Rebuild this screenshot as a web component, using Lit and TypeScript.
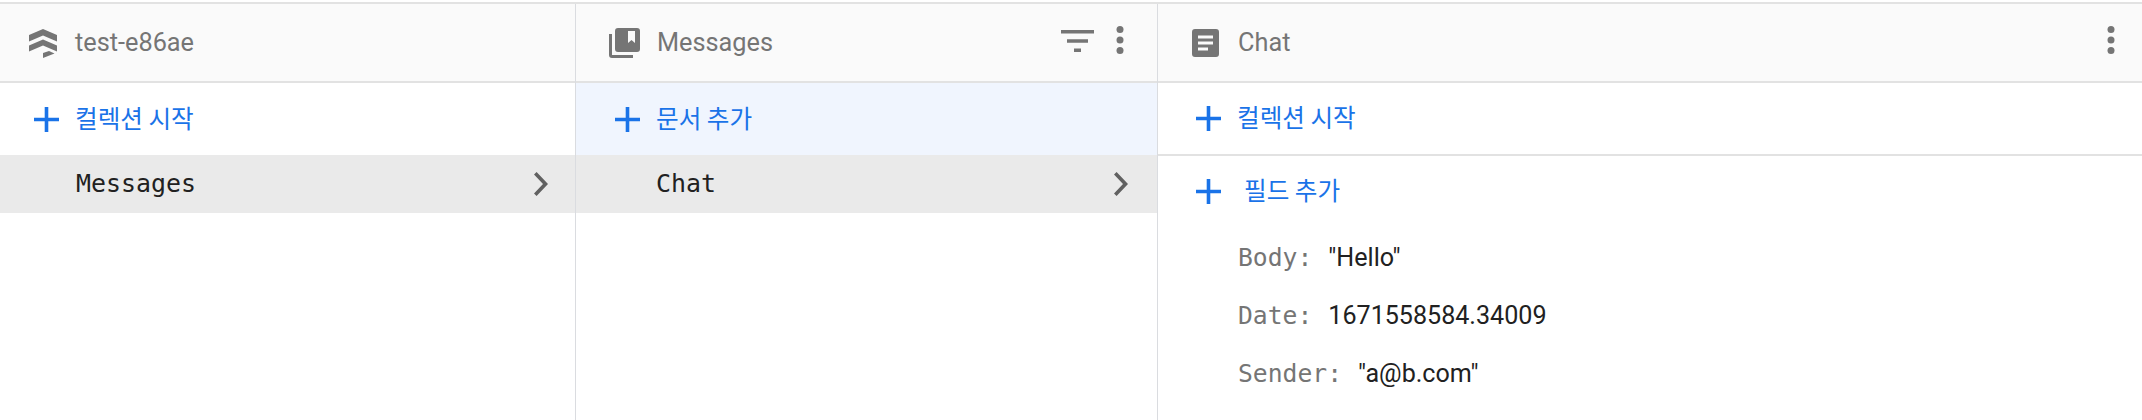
import { LitElement, html, css } from "lit";
import { customElement } from "lit/decorators.js";

const plus = html`<svg class="plus" viewBox="0 0 25 25"><path d="M10.7 0h3.6v10.7H25v3.6H14.3V25h-3.6V14.3H0v-3.6h10.700z"/></svg>`;
const chevron = html`<svg class="chev" viewBox="0 0 14 24"><path d="M2.6 0 0 2.6 9 12l-9 9.4L2.6 24 14 12z"/></svg>`;
const dots = (cls = "") => html`<svg class="dots ${cls}" viewBox="0 0 8 28"><circle cx="4" cy="3.500" r="3.500"/><circle cx="4" cy="14" r="3.500"/><circle cx="4" cy="24.500" r="3.500"/></svg>`;

@customElement("app-root")
export class AppRoot extends LitElement {
  static styles = css`
    :host { display: block; width: 2142px; height: 420px; overflow: hidden; background: #fff; font-family: Roboto, "Noto Sans CJK KR", sans-serif; }
    .top { height: 2px; background: #fff; border-bottom: 2px solid #e2e2e2; }
    .cols { display: grid; grid-template-columns: 576px 582px 1fr; height: 416px; }
    .col { border-right: 1px solid #dadce0; min-width: 0; display: flex; flex-direction: column; }
    .col:last-child { border-right: 0; }
    .head { height: 77px; flex: none; background: #fafafa; border-bottom: 2px solid #e2e2e2; display: flex; align-items: center; color: #757575; font-size: 25.3px; }
    .head svg { fill: #757575; flex: none; display: block; }
    .head .title { flex: 1; }
    .logo { width: 28px; height: 29px; margin: 2px 18px 0 29px; }
    .books { width: 31px; height: 30px; margin: 0 17px 0 33px; }
    .doc { width: 27px; height: 28px; margin: 0 19px 0 34px; }
    .filter { width: 33px; height: 22px; margin: -4px 22px 0 0; }
    .dots { width: 8px; height: 28px; margin: -6px 33px 0 0; }
    .head .last { margin-right: 27px; }
    .add { height: 72px; flex: none; display: flex; align-items: center; gap: 16px; color: #1a73e8; font-size: 24.6px; font-family: "Noto Sans CJK KR", Roboto, sans-serif; padding: 0 0 0 34px; }
    .add span { margin-top: -5px; }
    .add.tint { background: #f0f5fe; padding-left: 39px; }
    .add.wide { padding-left: 38px; border-bottom: 2px solid #e2e2e2; height: 71px; }
    .add.field { padding-left: 38px; gap: 23px; height: 71px; }
    .plus { width: 25px; height: 25px; fill: #1a73e8; flex: none; }
    .row { height: 58px; flex: none; background: #eaeaea; display: flex; align-items: center; justify-content: space-between; font-family: "DejaVu Sans Mono", monospace; font-size: 24.9px; color: #212121; padding: 0 27px 0 76px; }
    .row span { margin-top: -1px; }
    .row.second { padding-left: 80px; padding-right: 29px; }
    .chev { width: 14px; height: 24px; fill: #616161; flex: none; }
    .fields { display: flex; flex-direction: column; padding: 1px 0 0 80px; }
    .f { height: 58px; display: flex; align-items: center; gap: 16px; font-size: 25.1px; color: #212121; }
    .k { font-family: "DejaVu Sans Mono", monospace; font-size: 24.7px; color: #757575; }
  `;

  render() {
    return html`
      <div class="top"></div>
      <div class="cols">
        <section class="col">
          <header class="head">
            <svg class="logo" viewBox="0 0 28 29"><path d="M14 0 28 6v6.500L14 6.500 0 12.500V6zM14 10.500l14 6v6L14 16.500 0 22.500v-6zM14 24l6-2 5.500 2.500L14 29z"/></svg>
            <span class="title">test-e86ae</span>
          </header>
          <div class="add">${plus}<span>컬렉션 시작</span></div>
          <div class="row"><span>Messages</span>${chevron}</div>
        </section>
        <section class="col">
          <header class="head">
            <svg class="books" viewBox="0 0 31 30"><path d="M3 6H0v21a3 3 0 0 0 3 3h21v-3H3z"/><path fill-rule="evenodd" d="M9 0h19a3 3 0 0 1 3 3v18a3 3 0 0 1-3 3H9a3 3 0 0 1-3-3V3a3 3 0 0 1 3-3zm10 3v12l3.500-3 3.500 3V3z"/></svg>
            <span class="title">Messages</span>
            <svg class="filter" viewBox="0 0 33 22"><path d="M0 0h33v3.600H0zM6 9.200h21v3.600H6zM13 18.400h7V22h-7z"/></svg>
            ${dots()}
          </header>
          <div class="add tint">${plus}<span>문서 추가</span></div>
          <div class="row second"><span>Chat</span>${chevron}</div>
        </section>
        <section class="col">
          <header class="head">
            <svg class="doc" viewBox="0 0 27 28"><path fill-rule="evenodd" d="M3 0h21a3 3 0 0 1 3 3v22a3 3 0 0 1-3 3H3a3 3 0 0 1-3-3V3a3 3 0 0 1 3-3zm3 6.500v3h15v-3zm0 6v3h15v-3zm0 6v3h10v-3z"/></svg>
            <span class="title">Chat</span>
            ${dots("last")}
          </header>
          <div class="add wide">${plus}<span>컬렉션 시작</span></div>
          <div class="add field">${plus}<span>필드 추가</span></div>
          <div class="fields">
            <div class="f"><span class="k">Body:</span><span>"Hello"</span></div>
            <div class="f"><span class="k">Date:</span><span>1671558584.34009</span></div>
            <div class="f"><span class="k">Sender:</span><span>"a@b.com"</span></div>
          </div>
        </section>
      </div>
    `;
  }
}
